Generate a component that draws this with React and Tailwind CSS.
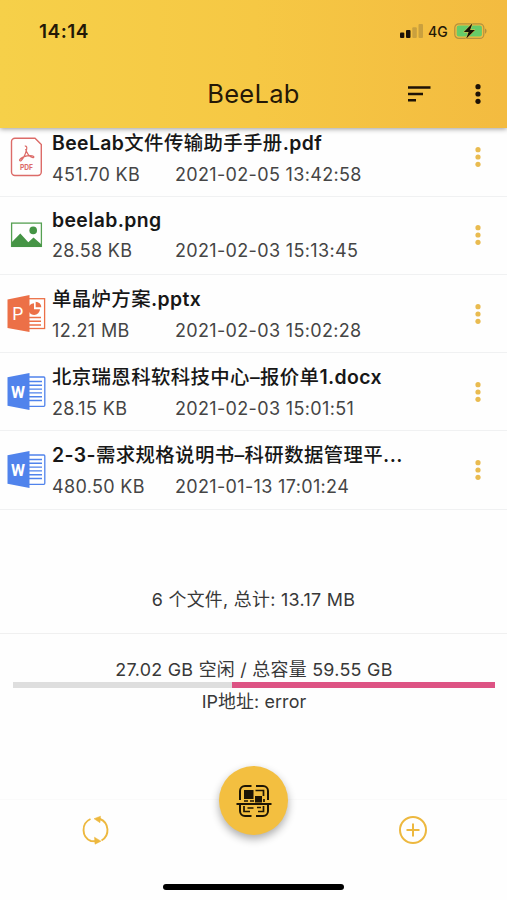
import React from "react";

const FONT = 'font-[Inter,"Noto_Sans_CJK_SC",sans-serif]';

function Dots({ className }) {
  return (
    <svg className={className} width="8" height="22" viewBox="0 0 8 22" fill="currentColor">
      <circle cx="4" cy="3.7" r="2.6" />
      <circle cx="4" cy="11" r="2.6" />
      <circle cx="4" cy="18.3" r="2.6" />
    </svg>
  );
}

function PdfIcon() {
  return (
    <svg width="40" height="40" viewBox="0 0 40 40" fill="none" stroke="#dc6b68" strokeWidth="1.4">
      <path d="M9 1.200H29L35.300 7.500V35A3.500 3.500 0 0 1 31.800 38.500H9A3.500 3.500 0 0 1 5.500 35V4.700A3.500 3.500 0 0 1 9 1.200Z" />
      <path d="M18.800 9.200c1.800-.5 2.300 1 1.800 3.200-1 4.600-3 8.600-5.400 11.100-.8.700-2 .2-1.500-.8 1.500-2 4-3.400 7.300-3.900 2.700-.4 5.400-.3 6.700.7.500.8-.2 1.300-1.500 1-2.900-.8-5.800-4.600-6.600-8.600" strokeWidth="1.200" />
      <text x="20.500" y="33.300" textAnchor="middle" fontSize="7.800" fontWeight="700" fontFamily="Inter, sans-serif" fill="#dc6b68" stroke="none" textLength="13" lengthAdjust="spacingAndGlyphs">PDF</text>
    </svg>
  );
}

function ImageIcon() {
  return (
    <svg width="40" height="40" viewBox="0 0 40 40">
      <rect x="5.600" y="8.100" width="29.800" height="23.300" fill="#fff" stroke="#55a052" strokeWidth="1.300" />
      <circle cx="27.200" cy="15.400" r="3.800" fill="#459445" />
      <path d="M5.500 27.500 14.300 18.500 22.300 27.300 27.500 22.500 35.500 29.500V32H5.500Z" fill="#459445" />
    </svg>
  );
}

function PptIcon() {
  return (
    <svg width="40" height="40" viewBox="0 0 40 40">
      <rect x="22" y="4.700" width="16.600" height="29.800" fill="#fff" stroke="#ec7047" strokeWidth="1.300" />
      <path d="M28 9.200a5.900 5.900 0 1 0 6 6h-6Z" fill="#ec7047" />
      <path d="M29.700 7.700a5.700 5.700 0 0 1 5.600 5.600H29.700Z" fill="#ec7047" />
      <path d="M23 23.500h12M23 27.300h12M23 31h12" stroke="#ec7047" strokeWidth="1.400" />
      <path d="M1.500 5.500 23.500 1V38L1.500 34Z" fill="#ec7047" />
      <text x="11.700" y="26" textAnchor="middle" fontSize="18.500" fontWeight="400" fontFamily="Roboto, sans-serif" fill="#fff" textLength="11" lengthAdjust="spacingAndGlyphs">P</text>
    </svg>
  );
}

function WordIcon() {
  return (
    <svg width="40" height="40" viewBox="0 0 40 40">
      <rect x="22" y="5" width="16.800" height="29.300" rx="1" fill="#fff" stroke="#5083ec" strokeWidth="1.300" />
      <path d="M23 9.500h13M23 13.300h13M23 17.100h13M23 20.900h13M23 24.700h13M23 28.500h13" stroke="#5083ec" strokeWidth="1.400" />
      <path d="M1.500 5.300 23.500 1V38L1.500 33.700Z" fill="#5083ec" />
      <text x="11.900" y="25.800" textAnchor="middle" fontSize="17" fontWeight="700" fontFamily="Roboto, sans-serif" fill="#fff" textLength="14" lengthAdjust="spacingAndGlyphs">W</text>
    </svg>
  );
}

const files = [
  { icon: PdfIcon, name: "BeeLab文件传输助手手册.pdf", size: "451.70 KB", date: "2021-02-05 13:42:58" },
  { icon: ImageIcon, name: "beelab.png", size: "28.58 KB", date: "2021-02-03 15:13:45" },
  { icon: PptIcon, name: "单晶炉方案.pptx", size: "12.21 MB", date: "2021-02-03 15:02:28" },
  { icon: WordIcon, name: "北京瑞恩科软科技中心–报价单1.docx", size: "28.15 KB", date: "2021-02-03 15:01:51" },
  { icon: WordIcon, name: "2-3-需求规格说明书–科研数据管理平...", size: "480.50 KB", date: "2021-01-13 17:01:24" },
];

// Han characters are set lighter than the Latin letters beside them.
function FileName({ name }) {
  return name.split(/([\u4e00-\u9fff–]+)/).map((run, i) =>
    i % 2 ? (
      <span key={i} className="font-medium">{run}</span>
    ) : (
      run
    )
  );
}

function FileRow({ file }) {
  const Icon = file.icon;
  const latinOnly = /^[\x00-\x7f]*$/.test(file.name);
  return (
    <li className="flex h-[78.2px] shrink-0 items-center border-b border-[#f0f1f2] pl-[6px] pr-[25px]">
      <Icon />
      <div className={`${latinOnly ? "pt-0" : "pt-[3px]"} ml-[6px] flex min-w-0 flex-1 flex-col`}>
        <div className={`${latinOnly ? "h-[30px]" : "h-[31px]"} whitespace-nowrap text-[19.4px] leading-[31px] font-semibold tracking-[0.4px] text-[#171717]`}>
          <FileName name={file.name} />
        </div>
        <div className="flex h-[31px] whitespace-nowrap text-[18px] leading-[31px] tracking-[0.34px] text-[#454545]">
          <span className="w-[123px]">{file.size}</span>
          <span>{file.date}</span>
        </div>
      </div>
      <Dots className="shrink-0 text-[#e9bb50]" />
    </li>
  );
}

function StatusBar() {
  return (
    <div className="flex h-[62px] items-center justify-between pl-[39px] pr-[20px]">
      <span className="pt-[2px] text-[19px] font-semibold tracking-[0.5px]">14:14</span>
      <div className="flex items-center">
        <svg width="24" height="16" viewBox="0 0 24 16">
          <rect x="0" y="9.500" width="4.300" height="5.500" rx="1" fill="#1b1207" />
          <rect x="6" y="7" width="4.500" height="8" rx="1" fill="#1b1207" />
          <rect x="12.300" y="4.200" width="4.500" height="10.800" rx="1" fill="#caa03e" />
          <rect x="18.500" y="1" width="4.500" height="14" rx="1" fill="#caa03e" />
        </svg>
        <span className="ml-[4px] w-[20px] text-[14px] font-medium">4G</span>
        <svg className="ml-[6px]" width="33" height="18" viewBox="0 0 33 18">
          <rect x=".8" y="1.800" width="29" height="14.600" rx="4" fill="none" stroke="#b5913d" strokeWidth="1.200" />
          <rect x="2.700" y="3.600" width="25.200" height="11" rx="2" fill="#67cb69" />
          <path d="M31 6.500c2.100.7 2.100 4.500 0 5.200Z" fill="#b5913d" />
          <path d="M18.500 1.200 9.800 10h4.800l-2.500 6.800L21 8h-4.900Z" fill="#171309" stroke="#f5c444" strokeWidth="1" paintOrder="stroke" />
        </svg>
      </div>
    </div>
  );
}

function ScanIcon() {
  return (
    <svg width="36" height="34" viewBox="0 0 36 34" fill="none" stroke="#1d1505" strokeWidth="2">
      <path d="M15.500 2H9a5 5 0 0 0-5 5v9M20 2h7a5 5 0 0 1 5 5v9M4 20v7a5 5 0 0 0 5 5h6.500M20 32h7a5 5 0 0 0 5-5v-7" />
      <path d="M8 6h9.500v9H8ZM19 12h7v6.500h-7Z" fill="#1d1505" stroke="none" />
      <path d="M19.500 6.500H27.500V12M8 17h4M14 17h4M28 15v3M8 22v5.500h6M11.500 24h6M21 23.500h4M27.500 22v5.500H22" strokeWidth="1.700" />
      <path d="M.5 20h35" strokeWidth="2.200" />
    </svg>
  );
}

export default function App() {
  return (
    <div className={`relative flex h-[900px] w-[507px] flex-col overflow-hidden bg-[#fefefe] ${FONT}`}>
      <header className="z-10 flex h-[128px] shrink-0 flex-col bg-linear-to-r from-[#f6d049] via-[#f6c844] to-[#f3bb40] text-[#241807] shadow-[0_1px_5px_rgba(0,0,0,0.4)]">
        <StatusBar />
        <div className="grid h-[64px] grid-cols-[1fr_auto_1fr] items-center">
          <span />
          <h1 className="text-[25.500px] leading-none font-normal tracking-[0.3px]">BeeLab</h1>
          <div className="flex items-center justify-end gap-[43px] pr-[25px] text-[#1d1206]">
            <svg width="24" height="18" viewBox="0 0 24 18" fill="none" stroke="currentColor" strokeWidth="2.500">
              <path d="M1 2.500h22.500M1 9h15M1 15.300h8" />
            </svg>
            <Dots />
          </div>
        </div>
      </header>

      <ul className="-mt-[9.400px] flex shrink-0 flex-col">
        {files.map((f) => (
          <FileRow key={f.name} file={f} />
        ))}
      </ul>

      <div className="flex h-[124.900px] shrink-0 items-end justify-center border-b border-[#f0f0f0] pb-[17px] text-[17.900px] leading-[32px] tracking-[0.3px] text-[#383838]">
        <span>6 个文件, 总计: 13.17 MB</span>
      </div>

      <section className="flex shrink-0 flex-col items-center pr-[12px] pl-[13px] pt-[21.500px] text-[17.900px] tracking-[0.28px] text-[#383838]">
        <div className="h-[26px] leading-[27px]">27.02 GB 空闲 / 总容量 59.55 GB</div>
        <div className="flex h-[6px] w-full bg-[#dedede]">
          <div className="ml-auto h-full w-[54.600%] bg-[#dd5384]" />
        </div>
        <div className="h-[26px] leading-[27px] tracking-[0.1px]">IP地址: error</div>
      </section>

      <footer className="mt-auto flex h-[101px] shrink-0 flex-col border-t border-[#fafafa]">
        <nav className="grid h-[60px] grid-cols-3 items-center pb-[1px] text-[#edb83f]">
          <svg className="ml-[81px]" width="28" height="30" viewBox="0 0 28 30" fill="none" stroke="currentColor" strokeWidth="1.900">
            <path d="M9.500 4A12 12 0 0 0 10 26L15 26.300" />
            <path d="M20.500 25.500A12 12 0 0 0 19 4L16 3.600" />
            <path d="m13.500 22.200 6.500 4-6 3ZM19.500 1.200l-6.500 2.500 6 4Z" fill="currentColor" strokeWidth=".5" />
          </svg>
          <button aria-label="扫描" className="relative -top-[29px] -my-[10px] flex h-[69px] w-[69px] items-center justify-center justify-self-center rounded-full bg-[#f3bf40] shadow-[0_4px_8px_rgba(0,0,0,0.32)]">
            <ScanIcon />
          </button>
          <svg className="ml-[60px]" width="30" height="30" viewBox="0 0 30 30" fill="none" stroke="currentColor" strokeWidth="2">
            <circle cx="15" cy="15" r="13" />
            <path d="M15 8.500v13M8.500 15h13" />
          </svg>
        </nav>
        <div className="mx-auto mt-[24px] h-[6px] w-[181px] rounded-full bg-black" />
      </footer>
    </div>
  );
}
